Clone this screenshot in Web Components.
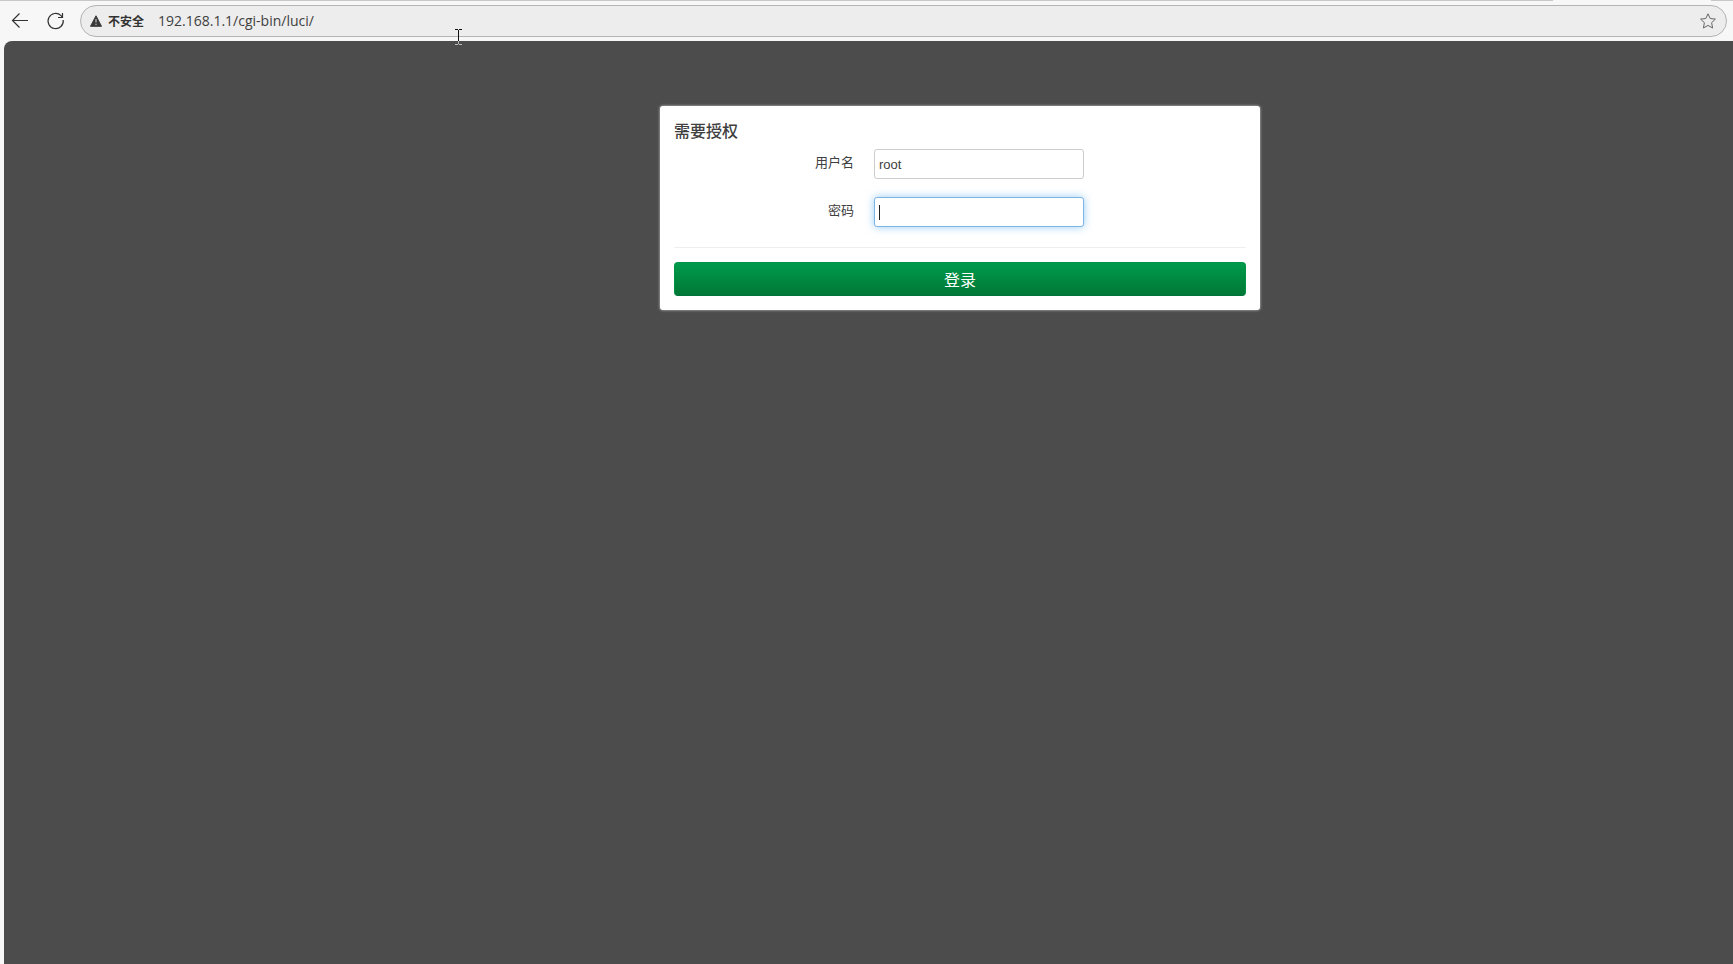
<!DOCTYPE html>
<html lang="zh-CN">
<head>
<meta charset="utf-8">
<title>LuCI</title>
<style>
  html, body {
    height: 100%;
    margin: 0;
  }
  body {
    font-family: "Liberation Sans", "Noto Sans CJK SC", sans-serif;
    font-size: 13px;
    line-height: 18px;
    color: #404040;
  }
</style>
</head>
<body>
<browser-window>
  <browser-toolbar slot="toolbar" url="192.168.1.1/cgi-bin/luci/">不安全</browser-toolbar>
  <login-dialog>
    <span slot="title">需要授权</span>
    <form-field name="username" type="text" value="root">用户名</form-field>
    <form-field name="password" type="password" active>密码</form-field>
    <span slot="submit">登录</span>
  </login-dialog>
  <text-cursor slot="cursor"></text-cursor>
</browser-window>

<script>
class BaseElement extends HTMLElement {
  constructor() {
    super();
    this.attachShadow({ mode: 'open' });
    this.shadowRoot.innerHTML = this.template();
  }
  gid(id) {
    return this.shadowRoot.getElementById(id);
  }
}

customElements.define('browser-window',
class extends BaseElement {
  template() {
    return `
      <style>
        :host {
          position: relative;
          display: flex;
          flex-direction: column;
          min-height: 100%;
          overflow: hidden;
          background: #f7f7f7;
        }
        /* bottom edge of the tab strip, open under the active tab */
        .tabs {
          display: grid;
          grid-template-columns: 1fr 158px 22px;
          height: 1px;
        }
        .tabs i {
          background: #c8c8c8;
        }
        .tabs i:nth-child(2) {
          background: none;
        }
        main {
          flex: 1;
          display: grid;
          grid-template-columns: 656fr minmax(auto, 600px) 473fr;
          align-items: start;
          margin-left: 4px;
          padding-top: 65px;
          border-top-left-radius: 8px;
          background: #4c4c4c;
        }
        main ::slotted(*) {
          grid-column: 2;
        }
      </style>
      <div class="tabs"><i></i><i></i><i></i></div>
      <slot name="toolbar"></slot>
      <main><slot></slot></main>
      <slot name="cursor"></slot>
    `;
  }
})

customElements.define('browser-toolbar',
class extends BaseElement {
  template() {
    return `
      <style>
        :host {
          display: flex;
          align-items: center;
          padding: 4px 6px 4px 8px;
          color: #333;
        }
        button {
          display: flex;
          padding: 0;
          border: 0;
          background: none;
          color: inherit;
        }
        .nav {
          margin-right: 12px;
        }
        svg {
          display: block;
          fill: none;
          stroke: currentColor;
        }
        .bar {
          flex: 1;
          display: flex;
          align-items: center;
          box-sizing: border-box;
          height: 32px;
          padding: 0 9px;
          border: 1px solid #b4b4b4;
          border-radius: 16px;
          background: #ededed;
        }
        .security {
          gap: 6px;
          align-items: center;
          margin-right: 14px;
          font: bold 12px/18px "Noto Sans CJK SC", sans-serif;
        }
        input {
          flex: 1;
          min-width: 0;
          padding: 0;
          border: 0;
          outline: 0;
          background: none;
          color: #404040;
          font: 14px/20px "Open Sans", sans-serif;
        }
        .star {
          color: #666;
        }
      </style>
      <button class="nav" aria-label="返回">
        <svg width="24" height="24" viewBox="0 0 24 24" stroke-width="1.2">
          <path d="M20 11.5H4.5M11.5 4.5L4.5 11.5L11.5 18.5"/>
        </svg>
      </button>
      <button class="nav" aria-label="刷新">
        <svg width="24" height="24" viewBox="0 0 24 24" stroke-width="1.2">
          <path d="M19.2 11A7.6 7.6 0 1 1 17 6.6L18.5 8.5M18.5 4V8.5H14"/>
        </svg>
      </button>
      <div class="bar">
        <button class="security">
          <svg width="12" height="12" viewBox="0 0 12 12">
            <path d="M6 .8L11.5 11.3H.5Z" fill="#3a3a3a" stroke="#3a3a3a" stroke-linejoin="round"/>
            <path d="M6 4V7.6M6 8.8V10" stroke="#bbb" stroke-width="1.2"/>
          </svg>
          <slot></slot>
        </button>
        <input id="url" type="text" aria-label="地址" spellcheck="false">
        <button class="star" aria-label="收藏">
          <svg width="18" height="18" viewBox="0 0 18 18" stroke-linejoin="round">
            <path d="M9 1.8L11.2 6.5L16.4 7.1L12.6 10.7L13.6 16L9 13.4L4.4 16L5.4 10.7L1.6 7.1L6.8 6.5Z"/>
          </svg>
        </button>
      </div>
    `;
  }
  connectedCallback() {
    this.gid('url').value = this.getAttribute('url');
  }
})

customElements.define('login-dialog',
class extends BaseElement {
  template() {
    return `
      <style>
        :host {
          display: block;
          box-sizing: border-box;
          padding: 14px;
          border-radius: 3px;
          background: #fff;
          box-shadow: 0 0 3px #ccc;
        }
        h4 {
          margin: 0 0 5px;
          font: 500 16px/20px "Noto Sans CJK SC", sans-serif;
        }
        .fields {
          display: grid;
          gap: 18px;
          padding: 4px 0 20px;
          border-bottom: 1px solid #eee;
        }
        button {
          display: block;
          width: 100%;
          margin-top: 14px;
          padding: 6px 14px;
          border: 1px solid #009245;
          border-bottom-color: #00723a;
          border-radius: 4px;
          background: linear-gradient(#009b4c, #007836);
          color: #fff;
          font: 16px/20px "Noto Sans CJK SC", sans-serif;
        }
      </style>
      <form onsubmit="return false">
        <h4><slot name="title"></slot></h4>
        <div class="fields"><slot></slot></div>
        <button><slot name="submit"></slot></button>
      </form>
    `;
  }
})

customElements.define('form-field',
class extends BaseElement {
  template() {
    return `
      <style>
        :host {
          display: grid;
          grid-template-columns: 180px 210px;
          column-gap: 20px;
        }
        label {
          padding-top: 5px;
          text-align: right;
        }
        input {
          box-sizing: border-box;
          width: 100%;
          height: 30px;
          padding: 4px;
          border: 1px solid #ccc;
          border-radius: 3px;
          outline: 0;
          background: #fff;
          color: #404040;
          font: 13px/18px "Liberation Sans", sans-serif;
        }
        /* steady caret */
        :host([active]) input {
          border-color: #7db4e6;
          box-shadow: 0 0 8px rgba(82, 168, 236, .6);
          background: linear-gradient(#222, #222) 4px 7px / 1px 15px no-repeat #fff;
          caret-color: transparent;
        }
      </style>
      <label for="field"><slot></slot></label>
      <input id="field">
    `;
  }
  connectedCallback() {
    let input = this.gid('field');
    input.type = this.getAttribute('type');
    input.name = this.getAttribute('name');
    input.value = this.getAttribute('value') || '';
  }
})

customElements.define('text-cursor',
class extends BaseElement {
  template() {
    return `
      <style>
        :host {
          position: absolute;
          left: 455px;
          top: 29px;
          pointer-events: none;
        }
        svg {
          display: block;
          fill: none;
        }
      </style>
      <svg width="7" height="16" viewBox="0 0 7 16">
        <path d="M0 .5H3M4 .5H7M3.5 1V12" stroke="#111"/>
        <path d="M3.5 12V15M0 15.5H3M4 15.5H7" stroke="#bbb"/>
      </svg>
    `;
  }
})
</script>
</body>
</html>
